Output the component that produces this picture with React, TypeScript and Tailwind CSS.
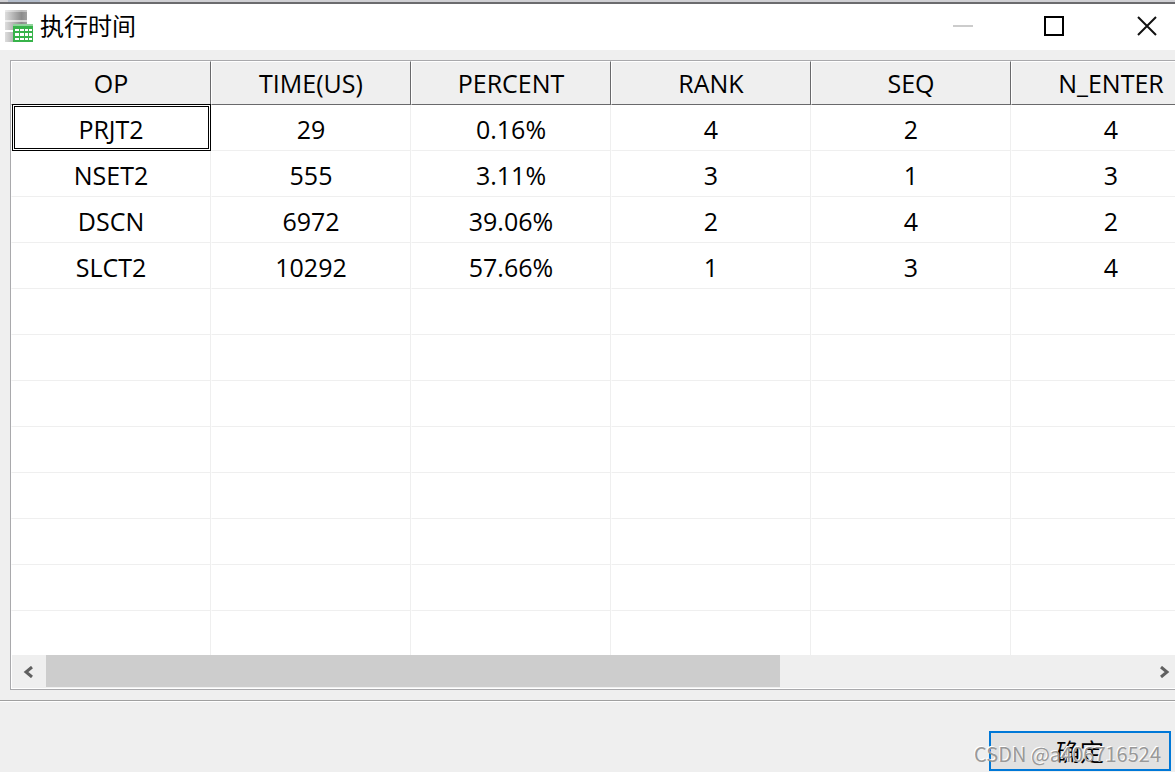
import React, { useState } from 'react';

const columns = ['OP', 'TIME(US)', 'PERCENT', 'RANK', 'SEQ', 'N_ENTER'];

const rows = [
  ['PRJT2', '29', '0.16%', '4', '2', '4'],
  ['NSET2', '555', '3.11%', '3', '1', '3'],
  ['DSCN', '6972', '39.06%', '2', '4', '2'],
  ['SLCT2', '10292', '57.66%', '1', '3', '4']
];

const EMPTY_ROWS = 8;

function TableIcon() {
  return (
    <svg width="28" height="32" viewBox="0 0 28 32" shapeRendering="crispEdges" aria-hidden="true">
      <defs>
        <linearGradient id="disk" x1="0" x2="1" y1="0" y2="0">
          <stop offset="0" stopColor="#dedede" />
          <stop offset="0.75" stopColor="#8c8c8c" />
          <stop offset="1" stopColor="#a0a0a0" />
        </linearGradient>
      </defs>
      <path d="M0 0h22v20H0zM0 22h22v10H0z" fill="url(#disk)" />
      <path d="M0 0h22v2H0z" fill="#fff" opacity="0.4" />
      <path d="M0 10h22v2H0z" fill="#fff" opacity="0.6" />
      <path d="M8 14h20v18H8z" fill="#37b34a" />
      <path d="M8 14h20v2H8z" fill="#8fd39b" />
      <path
        d="M10 19h4v2h-4zM15 19h4v2h-4zM20 19h3v2h-3zM24 19h3v2h-3zM10 23h4v3h-4zM15 23h4v3h-4zM20 23h3v3h-3zM24 23h3v3h-3zM10 28h4v2h-4zM15 28h4v2h-4zM20 28h3v2h-3zM24 28h3v2h-3z"
        fill="#fff"
      />
    </svg>
  );
}

function TitleBar() {
  return (
    <header className="flex h-[46px] shrink-0 items-start bg-white pl-[5px]">
      <div className="pt-[6px]">
        <TableIcon />
      </div>
      <h1 className="ml-[7px] flex-1 pt-[6px] text-[24px] leading-8">执行时间</h1>
      <button type="button" aria-label="最小化" className="flex h-11 w-[91px] items-center justify-center">
        <svg width="20" height="20" shapeRendering="crispEdges">
          <path d="M0 9h20v2H0z" fill="#ccc" />
        </svg>
      </button>
      <button type="button" aria-label="最大化" className="flex h-11 w-[91px] items-center justify-center">
        <svg width="20" height="20" shapeRendering="crispEdges">
          <path d="M1 1h18v18H1z" fill="none" stroke="#000" strokeWidth="2" />
        </svg>
      </button>
      <button type="button" aria-label="关闭" className="mr-[-20px] flex h-11 w-24 items-center justify-center">
        <svg width="20" height="20">
          <path d="M1 1l18 18M19 1L1 19" fill="none" stroke="#111" strokeWidth="2" />
        </svg>
      </button>
    </header>
  );
}

function ScrollBar() {
  return (
    <div className="mr-[-6px] flex h-[33px] shrink-0 border-l border-white bg-[#efefef]">
      <button type="button" aria-label="向左滚动" className="flex w-[34px] items-center justify-center">
        <svg width="12" height="12" viewBox="0 0 12 12">
          <path d="M9 1L3 6l6 5" fill="none" stroke="#606060" strokeWidth="3" />
        </svg>
      </button>
      <div className="flex-1">
        <div className="h-[32px] w-2/3 bg-[#cdcdcd]" />
      </div>
      <button type="button" aria-label="向右滚动" className="flex w-[34px] items-center justify-center">
        <svg width="12" height="12" viewBox="0 0 12 12">
          <path d="M3 1l6 5-6 5" fill="none" stroke="#606060" strokeWidth="3" />
        </svg>
      </button>
    </div>
  );
}

export default function App() {
  const [selected, setSelected] = useState('0-0');

  return (
    <div className="flex h-screen flex-col overflow-hidden bg-[#efefef] font-['Open_Sans','Noto_Sans_CJK_SC',sans-serif] text-black">
      <div className="h-1 shrink-0 border-b-2 border-[#6b6b6e] bg-[#d0d0d4]">
        <div className="ml-2 h-full w-8 bg-[#b4bdcb]" />
      </div>
      <TitleBar />

      <main className="mt-[10px] ml-[10px] flex min-h-0 flex-1 flex-col overflow-hidden border-y border-l border-[#a9a9ac] bg-white pb-px">
        <div className="min-h-0 flex-1 overflow-hidden">
          <table className="w-[1200px] table-fixed border-separate border-spacing-0 text-center text-[25px] leading-8">
            <thead>
              <tr>
                {columns.map(name => (
                  <th key={name} className="h-[44px] border border-t-white border-r-[#69696b] border-b-[#69696b] border-l-white bg-[#efefef] p-0 font-normal">
                    {name}
                  </th>
                ))}
              </tr>
            </thead>
            <tbody>
              {rows.map((row, r) => (
                <tr key={row[0]}>
                  {row.map((value, c) => (
                    <td
                      key={c}
                      onClick={() => setSelected(`${r}-${c}`)}
                      className="relative h-[46px] border-x border-b border-[#efefef] border-l-white p-0 pt-[3px]"
                    >
                      {value}
                      {selected === `${r}-${c}` && (
                        <span className="pointer-events-none absolute -top-px -right-px -bottom-px left-0 border-3 border-double border-black" />
                      )}
                    </td>
                  ))}
                </tr>
              ))}
              {Array.from({ length: EMPTY_ROWS }, (_, r) => (
                <tr key={r}>
                  {columns.map(name => (
                    <td key={name} className="h-[46px] border-x border-b border-[#efefef] border-l-white p-0" />
                  ))}
                </tr>
              ))}
            </tbody>
          </table>
        </div>
        <ScrollBar />
      </main>

      <footer className="relative mt-[10px] flex shrink-0 justify-end border-t border-[#a0a0a0] pb-px">
        <div className="flex flex-1 justify-end border-t border-white pt-[29px] pr-1">
          <button type="button" className="h-[40px] w-[182px] border-2 border-[#0078d7] bg-[#e1e1e1] pt-px text-[24px] leading-8">
            确定
          </button>
        </div>
        <span className="pointer-events-none absolute right-[14px] bottom-1 font-['Noto_Sans_CJK_SC',sans-serif] text-[20px] leading-7 text-[#999] [text-shadow:-1px_-1px_0_#fff]">
          CSDN @a406716524
        </span>
      </footer>
    </div>
  );
}
